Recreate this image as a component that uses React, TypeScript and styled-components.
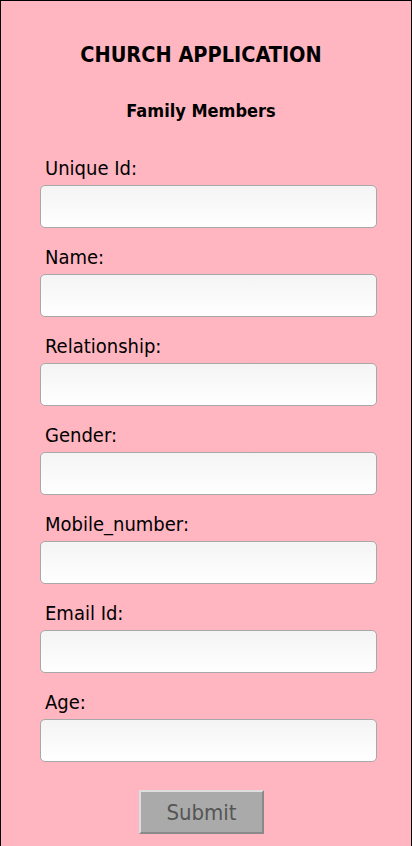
import React from "react";
import styled, { createGlobalStyle } from "styled-components";

const Global = createGlobalStyle`
  html, body { margin: 0; padding: 0; background: #ffffff; }
  * { box-sizing: border-box; }
`;

const Page = styled.div`
  width: 412px;
  min-height: 900px;
  border: 1px solid #000;
  background: #ffb6c1;
  font-family: "DejaVu Sans Condensed", "DejaVu Sans", Verdana, sans-serif;
  font-stretch: condensed;
  color: #000;
  padding-top: 41px;
`;

const Title = styled.h1`
  margin: 0;
  padding-right: 10px;
  font-size: 21.5px;
  line-height: 26px;
  font-weight: bold;
  text-align: center;
`;

const Subtitle = styled.h2`
  margin: 32px 0 0;
  padding-right: 10px;
  font-size: 18px;
  line-height: 22px;
  font-weight: bold;
  text-align: center;
`;

const Form = styled.form`
  display: flex;
  flex-direction: column;
  gap: 17px;
  padding: 34px 0 0 39px;
`;

const Field = styled.div`
  display: flex;
  flex-direction: column;
`;

const Label = styled.label`
  font-size: 20px;
  line-height: 24px;
  padding-left: 5px;
  margin-bottom: 5px;
`;

const Input = styled.input`
  width: 337px;
  height: 43px;
  border: 1px solid #a8a8a8;
  border-radius: 5px;
  background: linear-gradient(#f4f4f4, #ffffff);
  font-family: inherit;
  font-size: 16px;
  padding: 0 8px;
  outline: none;
`;

const Actions = styled.div`
  display: flex;
  justify-content: center;
  padding: 11px 10px 0 0;
  margin-left: -39px;
`;

const Submit = styled.button`
  width: 125px;
  height: 44px;
  margin-left: 1px;
  background: #aaaaaa;
  border: 2px solid;
  border-color: #dedede #8a8a8a #8a8a8a #dedede;
  color: #555555;
  font-family: inherit;
  font-stretch: condensed;
  font-size: 22px;
  padding: 0;
`;

const fields = [
  "Unique Id:",
  "Name:",
  "Relationship:",
  "Gender:",
  "Mobile_number:",
  "Email Id:",
  "Age:",
];

export default function App() {
  return (
    <>
      <Global />
      <Page>
        <Title>CHURCH APPLICATION</Title>
        <Subtitle>Family Members</Subtitle>
        <Form onSubmit={(e) => e.preventDefault()}>
          {fields.map((f) => (
            <Field key={f}>
              <Label>{f}</Label>
              <Input type="text" />
            </Field>
          ))}
          <Actions>
            <Submit type="submit">Submit</Submit>
          </Actions>
        </Form>
      </Page>
    </>
  );
}
